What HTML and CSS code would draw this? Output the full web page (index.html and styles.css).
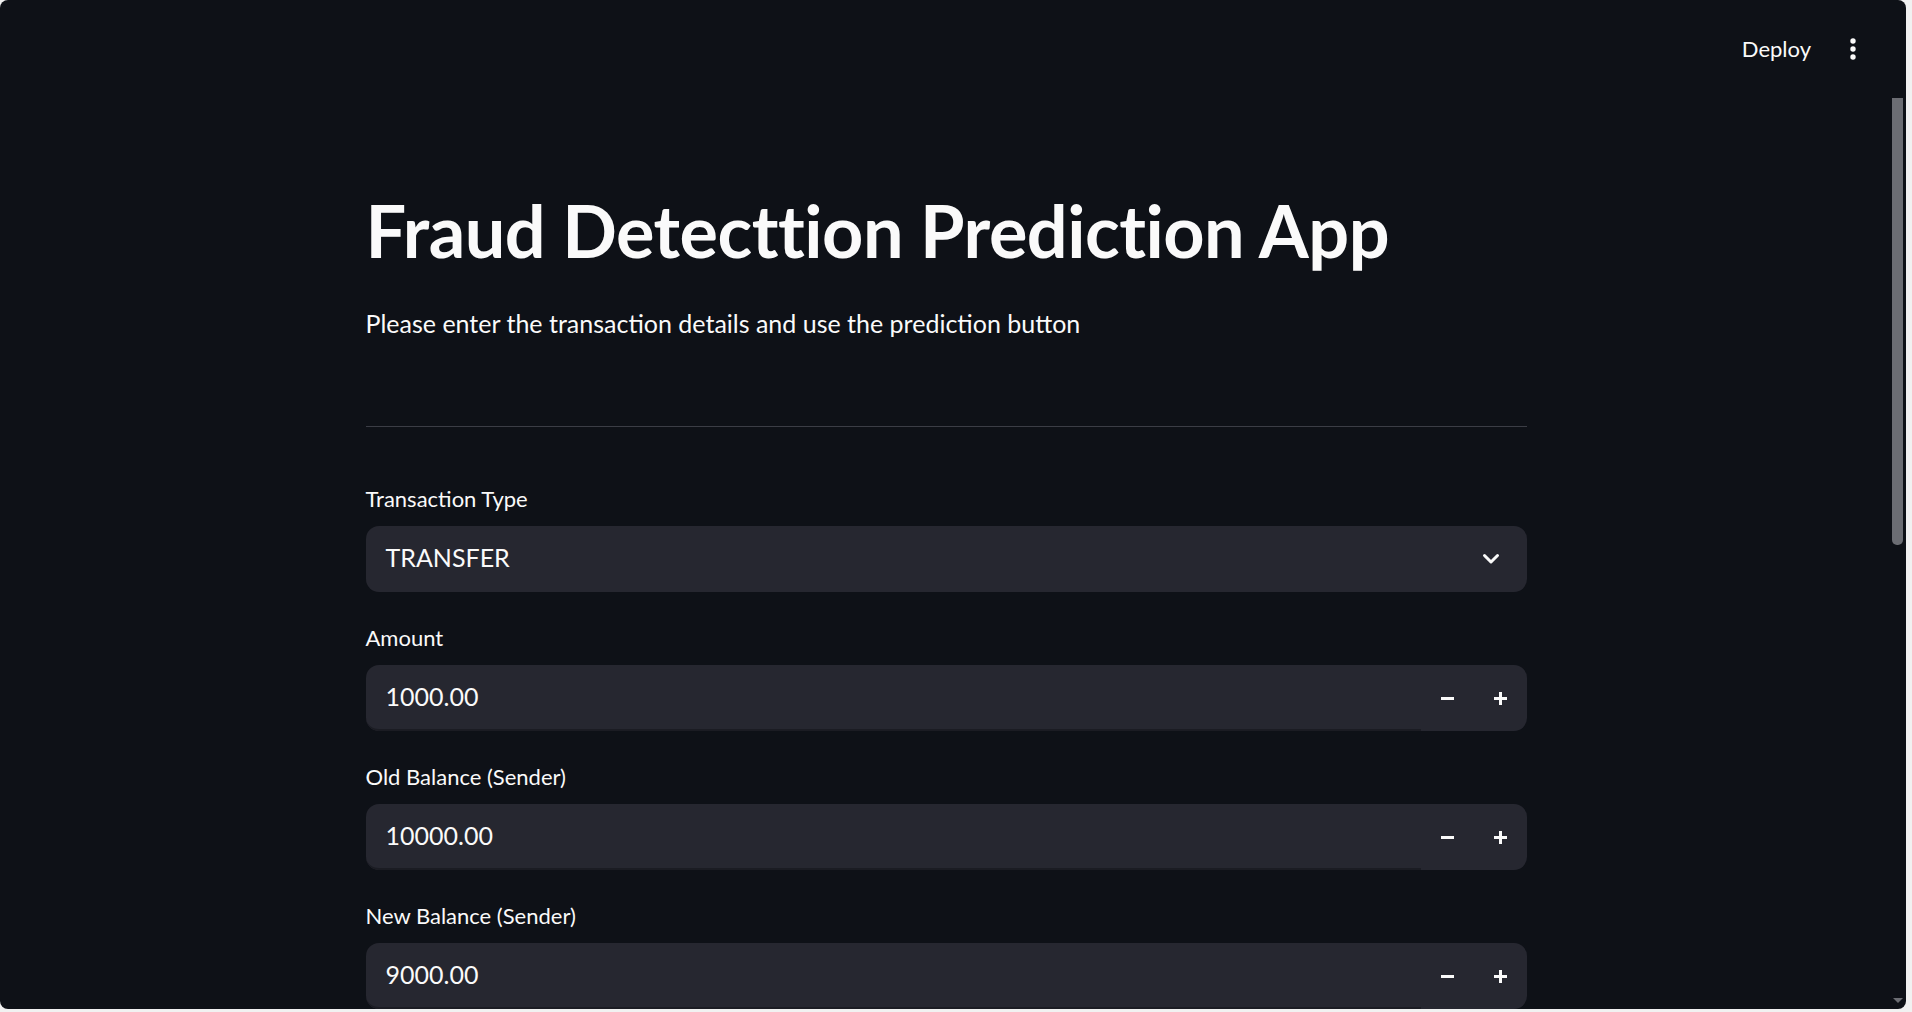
FILE: index.html
```html
<!DOCTYPE html>
<html>
<head>
<meta charset="utf-8">
<title>Fraud Detection</title>
<link rel="stylesheet" href="styles.css">
</head>
<body>
<div class="window">
  <div class="app">
    <header class="topbar">
      <span class="deploy">Deploy</span>
      <span class="menu">
        <svg width="8" height="24" viewBox="0 0 8 24"><circle cx="4" cy="4" r="2.7" fill="#fafafa"/><circle cx="4" cy="12" r="2.7" fill="#fafafa"/><circle cx="4" cy="20" r="2.7" fill="#fafafa"/></svg>
      </span>
    </header>
    <main class="main">
      <div class="block">
        <h1 class="title">Fraud Detecttion Prediction App</h1>
        <p class="intro">Please enter the transaction details and use the prediction button</p>
        <hr class="divider">
        <div class="field">
          <label class="label">Transaction Type</label>
          <div class="select">
            <span class="value">TRANSFER</span>
            <svg class="chev" width="18" height="12" viewBox="0 0 18 12"><path d="M2.5 2.5 L9 9 L15.5 2.5" fill="none" stroke="#fafafa" stroke-width="3" stroke-linecap="round" stroke-linejoin="round"/></svg>
          </div>
        </div>
        <div class="field">
          <label class="label">Amount</label>
          <div class="number">
            <span class="value num-value">1000.00</span>
            <span class="step"><span class="minus"></span></span>
            <span class="step"><span class="plus"></span></span>
          </div>
        </div>
        <div class="field">
          <label class="label">Old Balance (Sender)</label>
          <div class="number">
            <span class="value num-value">10000.00</span>
            <span class="step"><span class="minus"></span></span>
            <span class="step"><span class="plus"></span></span>
          </div>
        </div>
        <div class="field">
          <label class="label">New Balance (Sender)</label>
          <div class="number">
            <span class="value num-value">9000.00</span>
            <span class="step"><span class="minus"></span></span>
            <span class="step"><span class="plus"></span></span>
          </div>
        </div>
      </div>
    </main>
  </div>
  <div class="scrollbar">
    <div class="thumb"></div>
    <div class="spacer"></div>
    <div class="arrow"></div>
  </div>
</div>
</body>
</html>
```

FILE: styles.css
```css
html, body {
  margin: 0;
  padding: 0;
  background: #f1f1f1;
  overflow: hidden;
}
body {
  width: 1912px;
  height: 1012px;
  font-family: "Lato", "Open Sans", sans-serif;
  color: #fafafa;
}
.window {
  width: 1906px;
  height: 1009px;
  background: #0e1117;
  border-radius: 8px;
  overflow: hidden;
  display: flex;
}
.app {
  flex: 1;
  display: flex;
  flex-direction: column;
  min-width: 0;
}
.topbar {
  height: 97px;
  display: flex;
  align-items: center;
  justify-content: flex-end;
  padding-right: 35px;
  gap: 38px;
  box-sizing: border-box;
}
.deploy {
  font-size: 22px;
  line-height: 28px;
  color: #fafafa;
}
.menu {
  display: flex;
  align-items: center;
}
.main {
  display: flex;
  justify-content: center;
}
.block {
  width: 1161px;
  padding-top: 90px;
}
.title {
  margin: 0;
  font-size: 72px;
  line-height: 86px;
  font-weight: 700;
  letter-spacing: -0.5px;
}
.intro {
  margin: 29px 0 0 0;
  font-size: 25px;
  line-height: 42px;
}
.divider {
  margin: 82px 0 0 0;
  border: 0;
  height: 1px;
  background: #3b3d45;
}
.field {
  margin-top: 27px;
}
.divider + .field {
  margin-top: 53px;
}
.label {
  display: block;
  font-size: 22px;
  line-height: 37px;
  margin-bottom: 9px;
}
.select, .number {
  height: 66px;
  background: #262730;
  border-radius: 13px;
  display: flex;
  align-items: center;
  box-sizing: border-box;
}
.select {
  padding: 0 27px 4px 20px;
}
.chev {
  margin-top: 4px;
}
.value {
  flex: 1;
  font-size: 25px;
  line-height: 30px;
}
.chev {
  display: block;
}
.number {
  padding-left: 20px;
  overflow: hidden;
}
.num-value {
  align-self: stretch;
  display: flex;
  align-items: center;
  border-bottom: 2px solid #1b1c23;
  margin-left: -20px;
  padding-left: 20px;
  padding-bottom: 2px;
  border-bottom-left-radius: 13px;
}
.step {
  width: 53px;
  height: 66px;
  display: flex;
  align-items: center;
  justify-content: center;
}
.minus {
  width: 13px;
  height: 3px;
  background: #fafafa;
  display: block;
}
.plus {
  width: 13px;
  height: 13px;
  display: block;
  position: relative;
}
.plus::before, .plus::after {
  content: "";
  position: absolute;
  background: #fafafa;
}
.plus::before {
  left: 0;
  top: 5px;
  width: 13px;
  height: 3px;
}
.plus::after {
  left: 5px;
  top: 0;
  width: 3px;
  height: 13px;
}
.scrollbar {
  width: 14px;
  display: flex;
  flex-direction: column;
  align-items: flex-start;
  padding-top: 98px;
  padding-bottom: 6px;
  box-sizing: border-box;
}
.thumb {
  width: 11px;
  height: 447px;
  background: #6b6d73;
  border-radius: 0 0 5px 5px;
}
.spacer {
  flex: 1;
}
.arrow {
  width: 0;
  height: 0;
  margin-left: 1px;
  border-left: 5px solid transparent;
  border-right: 5px solid transparent;
  border-top: 5px solid #6b6d73;
}
```
